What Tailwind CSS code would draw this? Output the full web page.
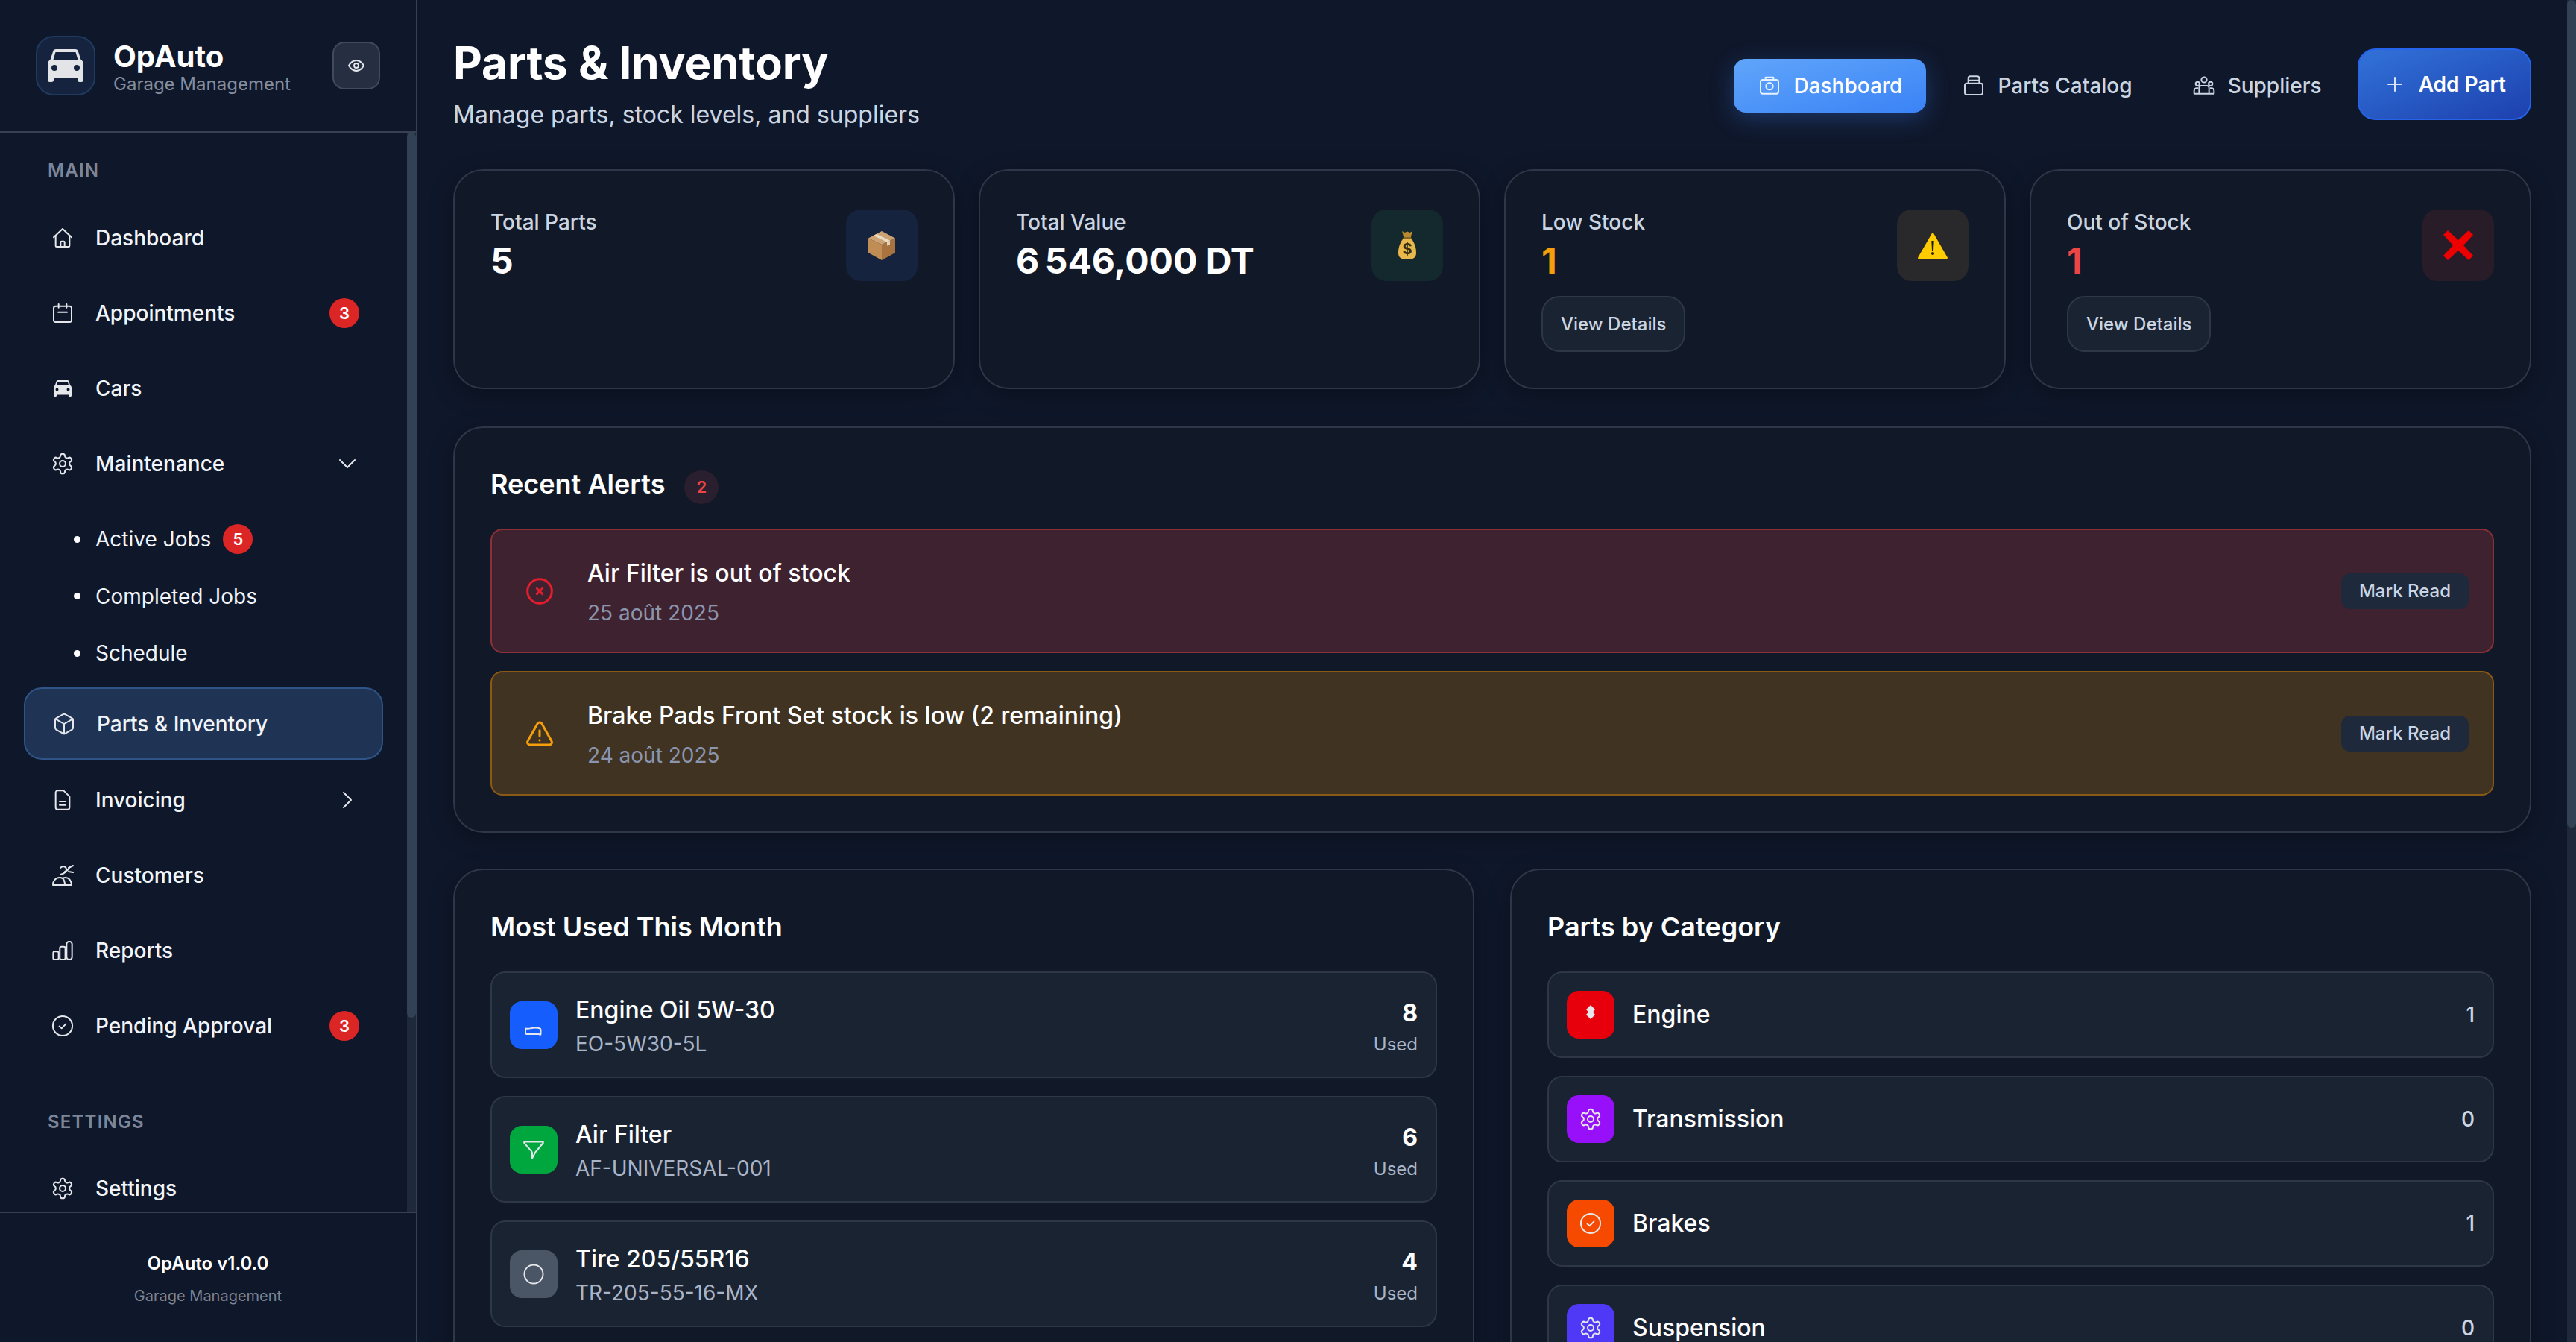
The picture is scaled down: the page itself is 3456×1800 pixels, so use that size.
<!DOCTYPE html>
<html lang="en">
<head>
  <meta charset="UTF-8" />
  <meta name="viewport" content="width=device-width, initial-scale=1.0"/>
  <title>OpAuto - Parts &amp; Inventory</title>
  <script src="https://cdn.jsdelivr.net/npm/@tailwindcss/browser@4"></script>
</head>
<body class="h-screen overflow-hidden bg-[#0f172a] font-['Inter',sans-serif] text-white">
  <!-- shared icons -->
  <svg class="hidden" xmlns="http://www.w3.org/2000/svg">
    <symbol id="gear" viewBox="0 0 24 24"><path d="M12.22 2h-.44a2 2 0 0 0-2 2v.18a2 2 0 0 1-1 1.73l-.43.25a2 2 0 0 1-2 0l-.15-.08a2 2 0 0 0-2.73.73l-.22.38a2 2 0 0 0 .73 2.73l.15.1a2 2 0 0 1 1 1.72v.51a2 2 0 0 1-1 1.74l-.15.09a2 2 0 0 0-.73 2.73l.22.38a2 2 0 0 0 2.73.73l.15-.08a2 2 0 0 1 2 0l.43.25a2 2 0 0 1 1 1.73V20a2 2 0 0 0 2 2h.44a2 2 0 0 0 2-2v-.18a2 2 0 0 1 1-1.73l.43-.25a2 2 0 0 1 2 0l.15.08a2 2 0 0 0 2.73-.73l.22-.39a2 2 0 0 0-.73-2.73l-.15-.08a2 2 0 0 1-1-1.74v-.5a2 2 0 0 1 1-1.74l.15-.09a2 2 0 0 0 .73-2.73l-.22-.38a2 2 0 0 0-2.73-.73l-.15.08a2 2 0 0 1-2 0l-.43-.25a2 2 0 0 1-1-1.73V4a2 2 0 0 0-2-2z" fill="none" stroke="currentColor" stroke-width="1.5"/><circle cx="12" cy="12" r="3" fill="none" stroke="currentColor" stroke-width="1.5"/></symbol>
    <symbol id="check" viewBox="0 0 24 24"><circle cx="12" cy="12" r="9.8" fill="none" stroke="currentColor" stroke-width="1.5"/><path d="m8.7 12.4 2.3 2 4.3-4.4" fill="none" stroke="currentColor" stroke-width="1.5" stroke-linecap="round" stroke-linejoin="round"/></symbol>
    <symbol id="car" viewBox="0 0 48 44"><path fill="currentColor" fill-rule="evenodd" d="M11 0H37a4 4 0 0 1 3.8 2.8L44.5 14C46.8 15.5 48 17 48 20V41a3 3 0 0 1-3 3h-2a3 3 0 0 1-3-3V39H8v2a3 3 0 0 1-3 3H3a3 3 0 0 1-3-3V20c0-3 1.2-4.5 3.5-6L7.2 2.8A4 4 0 0 1 11 0ZM10.500 4 7.500 14H40.500L37.500 4ZM5 25a4 4 0 1 0 8 0a4 4 0 1 0-8 0ZM35 25a4 4 0 1 0 8 0a4 4 0 1 0-8 0Z"/></symbol>
  </svg>

  <div class="flex h-screen">
    <!-- sidebar -->
    <aside class="flex h-full w-[560px] shrink-0 flex-col border-r-2 border-[#374151] bg-[#0f172a]">
      <div class="flex h-[178px] shrink-0 items-center border-b-2 border-[#374151] pl-[48px]">
        <div class="flex size-[80px] items-center justify-center rounded-[24px] border-2 border-[#1e3a5f] bg-[#15233e] text-[#e2e4e8]">
          <svg class="h-[44px] w-[48px]"><use href="#car"/></svg>
        </div>
        <div class="ml-[24px] w-[294px] pt-[6px]">
          <div class="text-[40px] leading-[44px] font-bold">OpAuto</div>
          <div class="text-[24px] leading-[30px] text-[#858d9d]">Garage Management</div>
        </div>
        <button class="flex size-[64px] items-center justify-center rounded-[16px] border-2 border-[#434b5a] bg-[#262f42] text-[#e5e7eb]">
          <svg class="size-[24px]" viewBox="0 0 24 24" fill="none" stroke="currentColor" stroke-width="1.8"><path d="M2 12s3.600-7 10-7 10 7 10 7-3.600 7-10 7-10-7-10-7z"/><circle cx="12" cy="12" r="3"/></svg>
        </button>
      </div>

      <div class="flex min-h-0 flex-1">
        <nav class="min-w-0 flex-1 overflow-hidden px-[32px] pt-[33px] text-[28px] font-medium text-[#f1f5f9]">
          <div class="mb-[25.5px] pl-[32px] text-[24px] leading-[36px] font-semibold tracking-[1.2px] text-[#7c8698]">MAIN</div>

          <a class="mb-[8px] flex h-[93px] items-center pr-[32px] pl-[36px]">
            <svg class="mr-[28px] size-[32px] text-[#e5e7eb]" viewBox="0 0 24 24" fill="none" stroke="currentColor" stroke-width="1.5" stroke-linejoin="round" stroke-linecap="round"><path d="M3 11.500 12 3l9 8.500"/><path d="M5 9.800V20a1 1 0 0 0 1 1h12a1 1 0 0 0 1-1V9.800"/><path d="M10 21v-4.500a1 1 0 0 1 1-1h2a1 1 0 0 1 1 1V21"/></svg>
            Dashboard
          </a>
          <a class="mb-[8px] flex h-[93px] items-center pr-[32px] pl-[36px]">
            <svg class="mr-[28px] size-[32px] text-[#e5e7eb]" viewBox="0 0 24 24" fill="none" stroke="currentColor" stroke-width="1.5" stroke-linecap="round"><rect x="3" y="5" width="18" height="16" rx="2"/><path d="M8 3v3.500M16 3v3.500M7.500 11h9"/></svg>
            Appointments
            <span class="ml-auto flex size-[40px] items-center justify-center rounded-full bg-[#dc2626] text-[22px] font-semibold text-white">3</span>
          </a>
          <a class="mb-[8px] flex h-[93px] items-center pr-[32px] pl-[36px]">
            <span class="mr-[28px] flex size-[32px] items-center justify-center text-[#e5e7eb]"><svg class="h-[22px] w-[24px]"><use href="#car"/></svg></span>
            Cars
          </a>
          <a class="mb-[8px] flex h-[93px] items-center pr-[32px] pl-[36px]">
            <svg class="mr-[28px] size-[32px] text-[#e5e7eb]"><use href="#gear"/></svg>
            Maintenance
            <svg class="ml-auto size-[32px] text-[#e5e7eb]" viewBox="0 0 32 32" fill="none" stroke="currentColor" stroke-width="2" stroke-linecap="round" stroke-linejoin="round"><path d="m6 11 10 10 10-10"/></svg>
          </a>

          <div class="pt-[12px] font-normal">
            <a class="mb-[7.5px] flex h-[69px] items-center pl-[67px]">
              <span class="mr-[20px] size-[9px] rounded-full bg-white"></span>
              Active Jobs
              <span class="ml-[16px] flex size-[40px] items-center justify-center rounded-full bg-[#dc2626] text-[22px] font-semibold text-white">5</span>
            </a>
            <a class="mb-[7.5px] flex h-[69px] items-center pl-[67px]">
              <span class="mr-[20px] size-[9px] rounded-full bg-white"></span>
              Completed Jobs
            </a>
            <a class="mb-[11.5px] flex h-[69px] items-center pl-[67px]">
              <span class="mr-[20px] size-[9px] rounded-full bg-white"></span>
              Schedule
            </a>
          </div>

          <a class="mb-[7.5px] flex h-[97px] items-center rounded-[24px] border-2 border-[#2f5488] bg-[#1f3355] pl-[36px]">
            <svg class="mr-[28px] size-[32px] text-[#e5e7eb]" viewBox="0 0 24 24" fill="none" stroke="currentColor" stroke-width="1.5" stroke-linejoin="round" stroke-linecap="round"><path d="M21 8a2 2 0 0 0-1-1.730l-7-4a2 2 0 0 0-2 0l-7 4A2 2 0 0 0 3 8v8a2 2 0 0 0 1 1.730l7 4a2 2 0 0 0 2 0l7-4A2 2 0 0 0 21 16Z"/><path d="m3.300 7 8.700 5 8.700-5M12 22V12"/></svg>
            Parts &amp; Inventory
          </a>
          <a class="mb-[8px] flex h-[93px] items-center pr-[32px] pl-[36px]">
            <svg class="mr-[28px] size-[32px] text-[#e5e7eb]" viewBox="0 0 24 24" fill="none" stroke="currentColor" stroke-width="1.5" stroke-linejoin="round" stroke-linecap="round"><path d="M13 2.500H7a2 2 0 0 0-2 2v15a2 2 0 0 0 2 2h10a2 2 0 0 0 2-2V8.500Z"/><path d="M9 13.500h6M9 17h6"/></svg>
            Invoicing
            <svg class="ml-auto size-[32px] text-[#e5e7eb]" viewBox="0 0 32 32" fill="none" stroke="currentColor" stroke-width="2" stroke-linecap="round" stroke-linejoin="round"><path d="m11 6 10 10-10 10"/></svg>
          </a>
          <a class="mb-[8px] flex h-[93px] items-center pr-[32px] pl-[36px]">
            <svg class="mr-[28px] size-[32px] text-[#e5e7eb]" viewBox="0 0 32 32" fill="none" stroke="currentColor" stroke-width="2" stroke-linejoin="round" stroke-linecap="round"><path d="M3 29c0-6 4-10 9-10 2 0 3 .500 4 1 1-.500 2-1 4-1 4 0 8 4 8 10z"/><path d="M16 20c2 2 3 5 3 9"/><path d="M13 6c3-3 8-2 8 2s-4 6-8 7M19 11c3-1 5-3 6-5M24 11l6 1M24 6l6-3"/></svg>
            Customers
          </a>
          <a class="mb-[8px] flex h-[93px] items-center pr-[32px] pl-[36px]">
            <svg class="mr-[28px] size-[32px] text-[#e5e7eb]" viewBox="0 0 24 24" fill="none" stroke="currentColor" stroke-width="1.5"><rect x="2.500" y="13" width="5.500" height="8" rx="1.500"/><rect x="9.200" y="8" width="5.500" height="13" rx="1.500"/><rect x="16" y="3" width="5.500" height="18" rx="2.500"/></svg>
            Reports
          </a>
          <a class="flex h-[93px] items-center pr-[32px] pl-[36px]">
            <svg class="mr-[28px] size-[32px] text-[#e5e7eb]"><use href="#check"/></svg>
            Pending Approval
            <span class="ml-auto flex size-[40px] items-center justify-center rounded-full bg-[#dc2626] text-[22px] font-semibold text-white">3</span>
          </a>

          <div class="mt-[64.5px] mb-[24.5px] pl-[32px] text-[24px] leading-[36px] font-semibold tracking-[1.2px] text-[#7c8698]">SETTINGS</div>
          <a class="flex h-[93px] items-center pl-[36px]">
            <svg class="mr-[28px] size-[32px] text-[#e5e7eb]"><use href="#gear"/></svg>
            Settings
          </a>
        </nav>
        <!-- sidebar scrollbar -->
        <div class="w-[12px] shrink-0 bg-[#1e293b]"><div class="h-[1187px] rounded-[6px] bg-[#334155]"></div></div>
      </div>

      <div class="h-[175px] shrink-0 border-t-2 border-[#374151] pt-[50px] text-center">
        <div class="text-[24px] leading-[36px] font-semibold">OpAuto v1.0.0</div>
        <div class="mt-[10px] text-[20px] leading-[30px] text-[#7b8494]">Garage Management</div>
      </div>
    </aside>

    <!-- main column -->
    <main class="min-w-0 flex-1 overflow-hidden p-[48px]">
      <header class="mb-[49px] flex h-[130px] items-center justify-between">
        <div>
          <h1 class="text-[60px] leading-[72px] font-bold">Parts &amp; Inventory</h1>
          <p class="mt-[10px] text-[32px] leading-[48px] text-[#cbd5e1]">Manage parts, stock levels, and suppliers</p>
        </div>
        <div class="flex items-center gap-[16px] text-[28px] font-medium">
          <button class="mt-[3px] flex h-[72px] items-center gap-[16px] rounded-[16px] bg-gradient-to-br from-[#60a5fa] to-[#3b82f6] px-[32px] text-white shadow-[0_8px_32px_rgba(59,130,246,0.3)]">
            <svg class="size-[32px] text-[#e8f1ff]" viewBox="0 0 24 24" fill="none" stroke="currentColor" stroke-width="1.5" stroke-linejoin="round"><rect x="3" y="6" width="18" height="14" rx="2"/><path d="M8 6V3.500h8V6"/><circle cx="12" cy="12.500" r="3.500"/></svg>
            Dashboard
          </button>
          <button class="mt-[3px] flex h-[72px] items-center gap-[16px] rounded-[16px] px-[32px] text-[#cbd5e1]">
            <svg class="size-[32px]" viewBox="0 0 24 24" fill="none" stroke="currentColor" stroke-width="1.5" stroke-linejoin="round"><path d="M6.500 9.500V4.500a2 2 0 0 1 2-2h7a2 2 0 0 1 2 2v5M6.500 6.500h11"/><rect x="3" y="9.500" width="18" height="11.500" rx="2"/></svg>
            Parts Catalog
          </button>
          <button class="mt-[3px] flex h-[72px] items-center gap-[16px] rounded-[16px] px-[32px] text-[#cbd5e1]">
            <svg class="size-[32px]" viewBox="0 0 24 24" fill="none" stroke="currentColor" stroke-width="1.5" stroke-linejoin="round"><circle cx="5.500" cy="10" r="2"/><circle cx="12" cy="6" r="2.700"/><circle cx="18.500" cy="10" r="2"/><path d="M2 20v-3a2.500 2.500 0 0 1 2.500-2.500h1.500M22 20v-3a2.500 2.500 0 0 0-2.500-2.500H18M7 20v-6a2 2 0 0 1 2-2h6a2 2 0 0 1 2 2v6ZM2 20h20"/></svg>
            Suppliers
          </button>
          <button class="flex h-[96px] items-center gap-[16px] rounded-[24px] border-2 border-[#2563eb] bg-gradient-to-br from-[#3272d8] to-[#1e40af] px-[32px] font-semibold text-white">
            <svg class="size-[32px] text-[#dbe5f5]" viewBox="0 0 32 32" fill="none" stroke="currentColor" stroke-width="2" stroke-linecap="round"><path d="M16 7v18M7 16h18"/></svg>
            Add Part
          </button>
        </div>
      </header>

      <!-- stat cards -->
      <section class="mb-[50px] grid grid-cols-4 gap-[32px]">
        <div class="flex justify-between rounded-[40px] border-2 border-[#2d3748] bg-[#111827] p-[48px] shadow-[0_8px_32px_rgba(0,0,0,0.3)]">
          <div>
            <div class="text-[28px] leading-[42px] font-medium text-[#cbd5e1]">Total Parts</div>
            <div class="mt-[7px] text-[48px] leading-[48px] font-bold">5</div>
          </div>
          <div class="mt-[4px] flex size-[96px] items-center justify-center rounded-[20px] bg-[#15233e]">
            <svg class="size-[40px]" viewBox="0 0 40 40"><path fill="#c08d55" d="M2 10.500 20 19v21L2 30z"/><path fill="#a8733f" d="M38 10.500 20 19v21l18-10z"/><path fill="#cda374" d="M2 10.500 20 1l18 9.500L20 19z"/><path fill="#ecdcc4" d="m9 7 18 8.800 4-2.100L13 4.900z"/><path fill="#e5d3b8" d="m27 15.800 4-2.100v5l-4 2.100z"/></svg>
          </div>
        </div>

        <div class="flex justify-between rounded-[40px] border-2 border-[#2d3748] bg-[#111827] p-[48px] shadow-[0_8px_32px_rgba(0,0,0,0.3)]">
          <div>
            <div class="text-[28px] leading-[42px] font-medium text-[#cbd5e1]">Total Value</div>
            <div class="mt-[7px] text-[48px] leading-[48px] font-bold">6&#8239;546,000 DT</div>
          </div>
          <div class="mt-[4px] flex size-[96px] items-center justify-center rounded-[20px] bg-[#13292d]">
            <svg class="h-[38px] w-[28px]" viewBox="0 0 28 38"><path fill="#b98a2e" d="M7 0l3.500 2L14 .500 17.500 2 21 0l-2.500 9h-9z"/><path fill="#e8b84a" d="M9.500 9h9C23 14 26 21 26 29c0 6-3 9-12 9S2 35 2 29C2 21 5 14 9.500 9z"/><rect x="8.500" y="8" width="11" height="2.500" rx="1" fill="#8a6420"/><text x="14" y="31" text-anchor="middle" font-family="Inter,sans-serif" font-size="20" font-weight="700" fill="#3b2c10">$</text></svg>
          </div>
        </div>

        <div class="flex justify-between rounded-[40px] border-2 border-[#2d3748] bg-[#111827] p-[48px] shadow-[0_8px_32px_rgba(0,0,0,0.3)]">
          <div>
            <div class="text-[28px] leading-[42px] font-medium text-[#cbd5e1]">Low Stock</div>
            <div class="mt-[7px] text-[48px] leading-[48px] font-bold text-[#f59e0b]">1</div>
            <button class="mt-[23px] h-[75px] rounded-[24px] border-2 border-[#2d3748] bg-[#1a2332] px-[24px] text-[24px] font-medium text-[#cbd5e1]">View Details</button>
          </div>
          <div class="mt-[4px] flex size-[96px] items-center justify-center rounded-[20px] bg-[#29282a]">
            <svg class="h-[36px] w-[40px]" viewBox="0 0 40 36"><path fill="#fc0" stroke="#fc0" stroke-width="2" stroke-linejoin="round" d="M20 2 39 35H1z"/><path fill="#1a1a1a" d="M18.300 12h3.400l-.7 13h-2z"/><circle cx="20" cy="29" r="2" fill="#1a1a1a"/></svg>
          </div>
        </div>

        <div class="flex justify-between rounded-[40px] border-2 border-[#2d3748] bg-[#111827] p-[48px] shadow-[0_8px_32px_rgba(0,0,0,0.3)]">
          <div>
            <div class="text-[28px] leading-[42px] font-medium text-[#cbd5e1]">Out of Stock</div>
            <div class="mt-[7px] text-[48px] leading-[48px] font-bold text-[#ef4444]">1</div>
            <button class="mt-[23px] h-[75px] rounded-[24px] border-2 border-[#2d3748] bg-[#1a2332] px-[24px] text-[24px] font-medium text-[#cbd5e1]">View Details</button>
          </div>
          <div class="mt-[4px] flex size-[96px] items-center justify-center rounded-[20px] bg-[#291c29]">
            <svg class="size-[40px]" viewBox="0 0 40 40"><path fill="#e00" d="M6 0 20 13 34 0l6 6-13 14 13 14-6 6-14-13L6 40l-6-6 13-14L0 6z"/></svg>
          </div>
        </div>
      </section>

      <!-- alerts -->
      <section class="mb-[48px] rounded-[40px] border-2 border-[#2d3748] bg-[#111827] p-[48px] shadow-[0_8px_32px_rgba(0,0,0,0.3)]">
        <div class="mb-[32px] flex items-start gap-[26px]">
          <h2 class="text-[36px] leading-[55px] font-semibold">Recent Alerts</h2>
          <span class="mt-[9px] flex h-[45px] w-[46px] items-center justify-center rounded-full bg-[#2a1f2e] text-[22px] font-semibold text-[#ef4444]">2</span>
        </div>
        <div class="flex flex-col gap-[24px]">
          <div class="flex h-[167px] items-center rounded-[16px] border-2 border-[#8a3039] bg-[#3f222f] pr-[32px] pl-[44px]">
            <svg class="mr-[44px] size-[40px] shrink-0 text-[#e11d2e]" viewBox="0 0 24 24" fill="none" stroke="currentColor" stroke-width="1.8" stroke-linecap="round"><circle cx="12" cy="12" r="9.800"/><path d="m9.800 9.800 4.400 4.400m0-4.400-4.400 4.400"/></svg>
            <div class="pt-[3px]">
              <div class="text-[32px] leading-[48px] font-medium">Air Filter is out of stock</div>
              <div class="mt-[8px] text-[28px] leading-[42px] text-[#8b95ad]">25 août 2025</div>
            </div>
            <button class="ml-auto h-[48px] rounded-[12px] bg-[#1e293b] px-[24px] text-[24px] font-medium text-[#cbd5e1]">Mark Read</button>
          </div>
          <div class="flex h-[167px] items-center rounded-[16px] border-2 border-[#8a5a14] bg-[#403322] pr-[32px] pl-[44px]">
            <svg class="mr-[44px] size-[40px] shrink-0 text-[#f59e0b]" viewBox="0 0 24 24" fill="none" stroke="currentColor" stroke-width="1.8" stroke-linecap="round" stroke-linejoin="round"><path d="M10.300 3.900 2.400 18a2 2 0 0 0 1.700 3h15.800a2 2 0 0 0 1.700-3L13.700 3.900a2 2 0 0 0-3.400 0z"/><path d="M12 9.500v4.500M12 17.300v.1"/></svg>
            <div class="pt-[3px]">
              <div class="text-[32px] leading-[48px] font-medium">Brake Pads Front Set stock is low (2 remaining)</div>
              <div class="mt-[8px] text-[28px] leading-[42px] text-[#8b95ad]">24 août 2025</div>
            </div>
            <button class="ml-auto h-[48px] rounded-[12px] bg-[#1e293b] px-[24px] text-[24px] font-medium text-[#cbd5e1]">Mark Read</button>
          </div>
        </div>
      </section>

      <section class="grid grid-cols-2 gap-[48px]">
        <div class="rounded-[40px] border-2 border-[#2d3748] bg-[#111827] p-[48px] shadow-[0_8px_32px_rgba(0,0,0,0.3)]">
          <h2 class="mb-[32px] text-[36px] leading-[56px] font-semibold">Most Used This Month</h2>
          <div class="flex flex-col gap-[24px]">
            <div class="flex h-[143px] items-center rounded-[20px] border-2 border-[#2d3748] bg-[#1a2332] px-[24px]">
              <div class="mr-[24px] flex size-[64px] items-center justify-center rounded-[16px] bg-blue-600 text-[#e5e7eb]">
                <svg class="size-[32px]" viewBox="0 0 32 32" fill="none" stroke="currentColor" stroke-width="2" stroke-linejoin="round"><path d="M5.500 20.500c4 1 8-1 12-1 3 0 5 0 7 1 .7.300 1 1 1 2v5.500c0 .700-.500 1-1 1l-1-1H7c-1 0-2-.500-2-1.500v-5c0-.500 0-1 .500-1z"/></svg>
              </div>
              <div class="pt-[3px]">
                <div class="text-[32px] leading-[48px] font-medium">Engine Oil 5W-30</div>
                <div class="text-[28px] leading-[42px] text-[#a9b4c6]">EO-5W30-5L</div>
              </div>
              <div class="ml-auto pt-[4px] text-right">
                <div class="text-[32px] leading-[48px] font-bold">8</div>
                <div class="text-[24px] leading-[36px] text-[#a9b4c6]">Used</div>
              </div>
            </div>
            <div class="flex h-[143px] items-center rounded-[20px] border-2 border-[#2d3748] bg-[#1a2332] px-[24px]">
              <div class="mr-[24px] flex size-[64px] items-center justify-center rounded-[16px] bg-green-600 text-[#e5e7eb]">
                <svg class="size-[32px]" viewBox="0 0 32 32" fill="none" stroke="currentColor" stroke-width="2" stroke-linejoin="round"><path d="M4 5.500h24c.800 0 1.200.800.700 1.500L20 17.500c-.500.500-1 1-1.500 1.500l-4.500 8.500v-7c0-.800-.300-1.500-1-2.300L3.300 7C2.800 6.300 3.200 5.500 4 5.500z"/></svg>
              </div>
              <div class="pt-[3px]">
                <div class="text-[32px] leading-[48px] font-medium">Air Filter</div>
                <div class="text-[28px] leading-[42px] text-[#a9b4c6]">AF-UNIVERSAL-001</div>
              </div>
              <div class="ml-auto pt-[4px] text-right">
                <div class="text-[32px] leading-[48px] font-bold">6</div>
                <div class="text-[24px] leading-[36px] text-[#a9b4c6]">Used</div>
              </div>
            </div>
            <div class="flex h-[143px] items-center rounded-[20px] border-2 border-[#2d3748] bg-[#1a2332] px-[24px]">
              <div class="mr-[24px] flex size-[64px] items-center justify-center rounded-[16px] bg-gray-600 text-[#e5e7eb]">
                <svg class="size-[32px]" viewBox="0 0 32 32" fill="none" stroke="currentColor" stroke-width="2"><circle cx="16" cy="16" r="12.500"/></svg>
              </div>
              <div class="pt-[3px]">
                <div class="text-[32px] leading-[48px] font-medium">Tire 205/55R16</div>
                <div class="text-[28px] leading-[42px] text-[#a9b4c6]">TR-205-55-16-MX</div>
              </div>
              <div class="ml-auto pt-[4px] text-right">
                <div class="text-[32px] leading-[48px] font-bold">4</div>
                <div class="text-[24px] leading-[36px] text-[#a9b4c6]">Used</div>
              </div>
            </div>
          </div>
        </div>

        <div class="rounded-[40px] border-2 border-[#2d3748] bg-[#111827] p-[48px] shadow-[0_8px_32px_rgba(0,0,0,0.3)]">
          <h2 class="mb-[32px] text-[36px] leading-[56px] font-semibold">Parts by Category</h2>
          <div class="flex flex-col gap-[24px]">
            <div class="flex h-[116px] items-center rounded-[20px] border-2 border-[#2d3748] bg-[#1a2332] px-[24px]">
              <div class="mr-[24px] flex size-[64px] items-center justify-center rounded-[16px] bg-red-600 text-[#e5e7eb]">
                <svg class="mb-[8px] h-[19px] w-[12px]" viewBox="0 0 12 19"><path fill="currentColor" d="M6 0l6 6-3 3.500L12 13l-6 6-6-6 3-3.500L0 6z"/></svg>
              </div>
              <div class="text-[32px] font-medium">Engine</div>
              <div class="ml-auto text-[28px] font-medium text-[#cbd5e1]">1</div>
            </div>
            <div class="flex h-[116px] items-center rounded-[20px] border-2 border-[#2d3748] bg-[#1a2332] px-[24px]">
              <div class="mr-[24px] flex size-[64px] items-center justify-center rounded-[16px] bg-purple-600 text-[#e5e7eb]">
                <svg class="size-[32px]"><use href="#gear"/></svg>
              </div>
              <div class="text-[32px] font-medium">Transmission</div>
              <div class="ml-auto text-[28px] font-medium text-[#cbd5e1]">0</div>
            </div>
            <div class="flex h-[116px] items-center rounded-[20px] border-2 border-[#2d3748] bg-[#1a2332] px-[24px]">
              <div class="mr-[24px] flex size-[64px] items-center justify-center rounded-[16px] bg-orange-600 text-[#e5e7eb]">
                <svg class="size-[32px]"><use href="#check"/></svg>
              </div>
              <div class="text-[32px] font-medium">Brakes</div>
              <div class="ml-auto text-[28px] font-medium text-[#cbd5e1]">1</div>
            </div>
            <div class="flex h-[116px] items-center rounded-[20px] border-2 border-[#2d3748] bg-[#1a2332] px-[24px]">
              <div class="mr-[24px] flex size-[64px] items-center justify-center rounded-[16px] bg-indigo-600 text-[#e5e7eb]">
                <svg class="size-[32px]"><use href="#gear"/></svg>
              </div>
              <div class="text-[32px] font-medium">Suspension</div>
              <div class="ml-auto text-[28px] font-medium text-[#cbd5e1]">0</div>
            </div>
          </div>
        </div>
      </section>
    </main>

    <!-- page scrollbar -->
    <div class="w-[12px] shrink-0 bg-[#1e293b]"><div class="h-[1110px] rounded-[6px] bg-[#334155]"></div></div>
  </div>
</body>
</html>
